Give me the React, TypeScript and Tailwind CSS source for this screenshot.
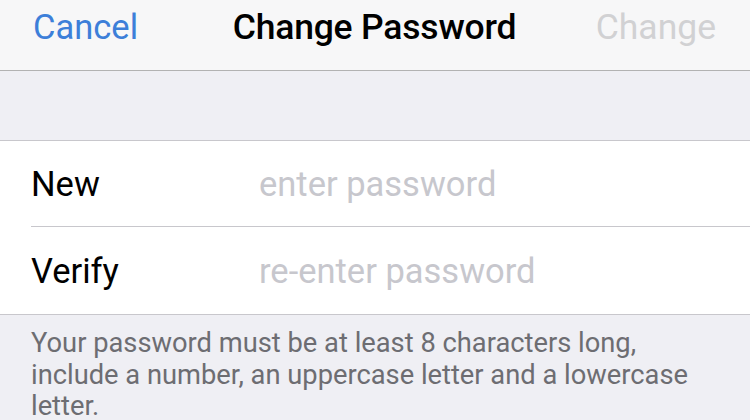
export default function App() {
  const font = { fontFamily: "Roboto, 'Liberation Sans', sans-serif" };
  return (
    <div className="w-[750px] h-[420px] overflow-hidden bg-[#efeff4]" style={font}>
      <div className="h-[71px] bg-[#f7f7f8] border-b border-[#b2b2b2] flex items-start pl-[33px] pr-[34px] pt-[4px]">
        <div className="flex-1">
          <span className="text-[34.5px] leading-[46px] text-[#3d7fd9]">Cancel</span>
        </div>
        <span className="text-[35.5px] leading-[46px] font-medium text-black tracking-[-0.2px]">Change Password</span>
        <div className="flex-1 flex justify-end">
          <span className="text-[35.5px] leading-[46px] text-[#d1d1d3]">Change</span>
        </div>
      </div>
      <div className="h-[69px]" />
      <div className="bg-white border-t border-b border-[#c8c7cc]">
        <div className="pl-[31px]">
          <div className="h-[86px] flex items-center border-b border-[#c8c7cc] pt-[2px]">
            <span className="w-[228px] text-[34.5px] text-black">New</span>
            <span className="text-[34.5px] text-[#c7c7cd]">enter password</span>
          </div>
          <div className="h-[87px] flex items-center pt-[2px]">
            <span className="w-[228px] text-[34.5px] text-black">Verify</span>
            <span className="text-[34.5px] text-[#c7c7cd]">re-enter password</span>
          </div>
        </div>
      </div>
      <div className="px-[31px] pt-[13px] text-[27.3px] leading-[31.5px] text-[#6d6d72]">
        Your password must be at least 8 characters long, include a number, an uppercase letter and a lowercase letter.
      </div>
    </div>
  );
}
